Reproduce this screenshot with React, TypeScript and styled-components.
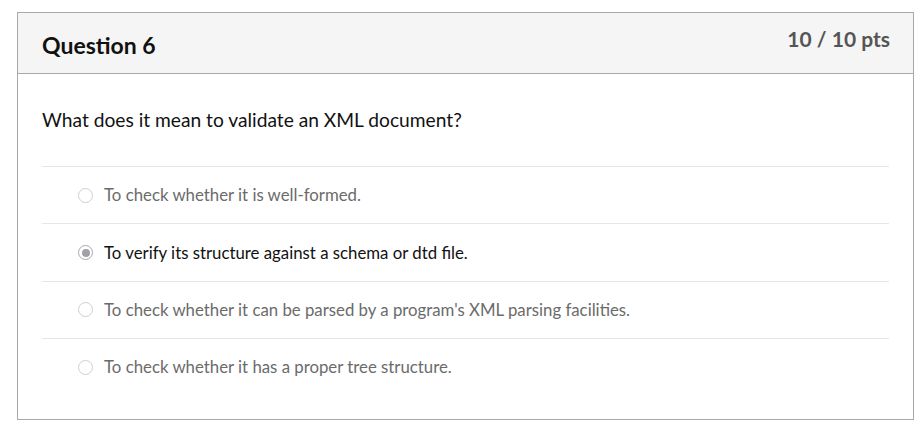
import React from "react";
import styled, { createGlobalStyle } from "styled-components";

const GlobalStyle = createGlobalStyle`
  body {
    margin: 0;
    background: #ffffff;
    font-family: Lato, "Open Sans", sans-serif;
  }
`;

const Card = styled("div")`
  margin: 12px 0 0 17px;
  width: 897px;
  height: 408px;
  box-sizing: border-box;
  border: 1px solid #a8a8a8;
  display: flex;
  flex-direction: column;
`;

const Header = styled("div")`
  height: 60px;
  background: #f5f5f5;
  border-bottom: 1px solid #a8a8a8;
  display: flex;
  justify-content: space-between;
  padding: 0 23px 0 24px;
`;

const Title = styled("h2")`
  margin: 0;
  padding-top: 2px;
  font-size: 23px;
  font-weight: 700;
  line-height: 60px;
  color: #111;
`;

const Points = styled("div")`
  margin-top: 13px;
  font-size: 21px;
  font-weight: 700;
  line-height: 26px;
  color: #555;
`;

const Body = styled("div")`
  padding: 33px 24px 0 24px;
`;

const QuestionText = styled("p")`
  margin: 0 0 33px;
  font-size: 19.2px;
  line-height: 26px;
  color: #111;
`;

const Answer = styled("label")<{ selected?: boolean }>`
  display: flex;
  align-items: center;
  height: 57.4px;
  box-sizing: border-box;
  border-top: 1px solid #e6e6e6;
  padding: 0 0 1px 37px;
  font-size: 16.8px;
  color: ${(props) => (props.selected ? "#111" : "#6b6b6b")};
`;

const Radio = styled("span")<{ selected?: boolean }>`
  width: 15px;
  height: 15px;
  flex-shrink: 0;
  box-sizing: border-box;
  border-radius: 50%;
  border: 1px solid ${(props) => (props.selected ? "#a8a8a8" : "#cfcfcf")};
  background: #fff;
  margin: 1px 11px 0 -1px;
  display: flex;
  align-items: center;
  justify-content: center;
  &::after {
    content: "";
    width: 8px;
    height: 8px;
    border-radius: 50%;
    background: ${(props) => (props.selected ? "#a0a0a8" : "transparent")};
  }
`;

const answers = [
  "To check whether it is well-formed.",
  "To verify its structure against a schema or dtd file.",
  "To check whether it can be parsed by a program's XML parsing facilities.",
  "To check whether it has a proper tree structure.",
];

export default function App() {
  return (
    <>
      <GlobalStyle />
      <Card>
        <Header>
          <Title>Question 6</Title>
          <Points>10 / 10 pts</Points>
        </Header>
        <Body>
          <QuestionText>What does it mean to validate an XML document?</QuestionText>
          {answers.map((a, i) => (
            <Answer key={a} selected={i === 1}>
              <Radio selected={i === 1} />
              {a}
            </Answer>
          ))}
        </Body>
      </Card>
    </>
  );
}
